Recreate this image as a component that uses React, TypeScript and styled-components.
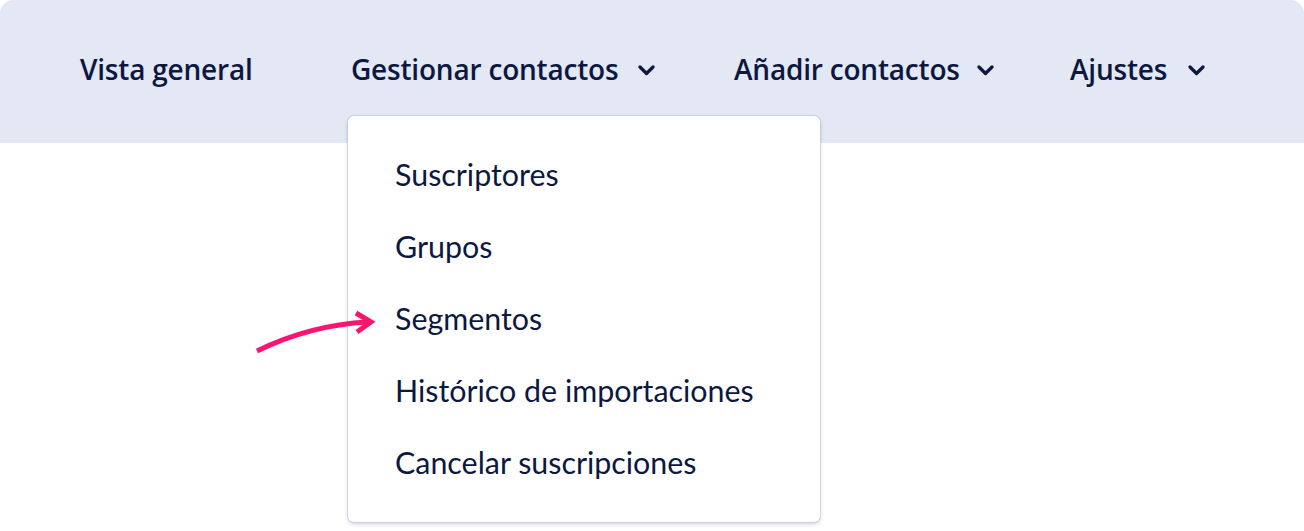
import React from 'react';
import styled, { createGlobalStyle } from 'styled-components';

const GlobalStyle = createGlobalStyle`
  body {
    margin: 0;
    background: #ffffff;
    font-family: 'Lato', 'Noto Sans', sans-serif;
    color: #0c1841;
  }
`;

const Page = styled.div`
  position: relative;
  width: 1304px;
  height: 531px;
  overflow: hidden;
`;

const NavBar = styled.nav`
  display: flex;
  height: 143px;
  padding-left: 80px;
  padding-bottom: 5px;
  box-sizing: border-box;
  background: #e4e8f4;
  border-radius: 14px 14px 0 0;
`;

const NavItem = styled.div<{ $width?: number }>`
  position: relative;
  display: flex;
  align-items: center;
  width: ${(p) => (p.$width ? `${p.$width}px` : 'auto')};
  flex-shrink: 0;
`;

const NavLabel = styled.span`
  font-family: 'Open Sans', 'Noto Sans', sans-serif;
  font-size: 28px;
  font-weight: 600;
  letter-spacing: -0.2px;
  white-space: nowrap;
`;

const Chevron = styled.svg<{ $gap: number }>`
  margin-left: ${(p) => p.$gap}px;
  width: 17px;
  height: 11px;
  margin-top: 2px;
`;

const Dropdown = styled.ul`
  position: absolute;
  top: 116px;
  left: -3px;
  width: 472px;
  margin: 0;
  padding: 22px 0 24px;
  box-sizing: border-box;
  list-style: none;
  background: #ffffff;
  border-radius: 6px;
  box-shadow: 0 0 0 1px rgba(170, 176, 200, 0.35), 0 2px 4px rgba(60, 70, 110, 0.25);
  z-index: 2;
`;

const DropdownItem = styled.li`
  display: flex;
  align-items: center;
  height: 72px;
  padding-left: 47px;
  font-size: 30.4px;
  font-weight: 400;
  white-space: nowrap;
`;

const Pointer = styled.svg`
  position: absolute;
  left: 250px;
  top: 305px;
  width: 130px;
  height: 55px;
  z-index: 3;
`;

const ChevronDown = ({ gap }: { gap: number }) => (
  <Chevron $gap={gap} viewBox="0 0 17 11">
    <path d="M2 2 L8.5 8.5 L15 2" fill="none" stroke="#0c1841" strokeWidth="3.2" strokeLinecap="round" strokeLinejoin="round" />
  </Chevron>
);

const menu = ['Suscriptores', 'Grupos', 'Segmentos', 'Histórico de importaciones', 'Cancelar suscripciones'];

export default function App() {
  return (
    <Page>
      <GlobalStyle />
      <NavBar>
        <NavItem $width={271}>
          <NavLabel>Vista general</NavLabel>
        </NavItem>
        <NavItem $width={383}>
          <NavLabel>Gestionar contactos</NavLabel>
          <ChevronDown gap={20} />
          <Dropdown>
            {menu.map((m) => (
              <DropdownItem key={m}>{m}</DropdownItem>
            ))}
          </Dropdown>
        </NavItem>
        <NavItem $width={336}>
          <NavLabel>Añadir contactos</NavLabel>
          <ChevronDown gap={17} />
        </NavItem>
        <NavItem>
          <NavLabel>Ajustes</NavLabel>
          <ChevronDown gap={21} />
        </NavItem>
      </NavBar>
      <Pointer viewBox="0 0 130 55">
        <path d="M7 46 Q 60 20 118 17" fill="none" stroke="#fb1470" strokeWidth="5" strokeLinecap="butt" />
        <path d="M106 8 L121 17 L107 27" fill="none" stroke="#fb1470" strokeWidth="5" strokeLinejoin="miter" />
      </Pointer>
    </Page>
  );
}
